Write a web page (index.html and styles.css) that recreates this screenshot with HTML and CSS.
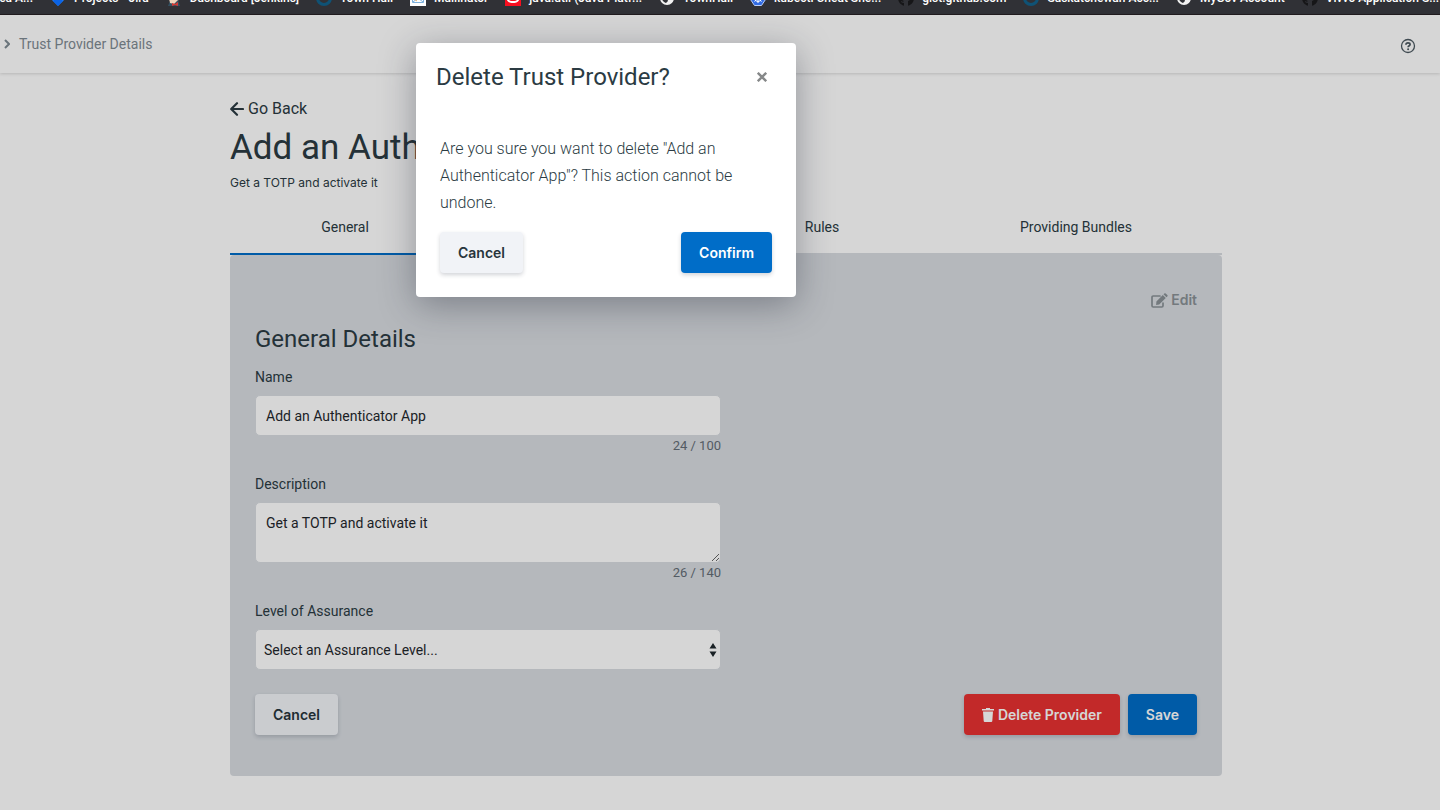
FILE: index.html
```html
<!DOCTYPE html>
<html lang="en">
<head>
<meta charset="utf-8">
<title>Trust Provider Details</title>
<link rel="stylesheet" href="styles.css">
</head>
<body>
<nav class="bookmarks" aria-label="Bookmarks">
  <a class="bookmark bookmark-first" href="#">Area A...</a>
  <a class="bookmark" href="#"><svg viewBox="0 0 16 16"><path fill="#2684ff" d="M8 0l8 8-8 8-8-8z"/><path fill="#0b63e5" d="M8 6l5 5-5 5-5-5z"/></svg>Projects - Jira</a>
  <a class="bookmark" href="#"><svg viewBox="0 0 16 16"><circle cx="8" cy="6" r="6" fill="#efd5bd"/><path fill="#335061" d="M2 16l2-5 8-1 2 6z"/><path fill="#efd5bd" d="M3 8l1 5 4 1 4-4V5H4z"/><path fill="#d33833" d="M6 13l3 1 3-2v4l-3-1-3 1z"/></svg>Dashboard [Jenkins]</a>
  <a class="bookmark" href="#"><svg viewBox="0 0 16 16"><circle cx="8" cy="8" r="6.500" fill="none" stroke="#0f5275" stroke-width="3" stroke-dasharray="34 7"/></svg>Town Hall</a>
  <a class="bookmark" href="#"><svg viewBox="0 0 16 16"><path fill="#fff" d="M0 0h16v16H0z"/><path fill="none" stroke="#7eb1dd" d="M2.500 4.500h11v8h-11zM3 12l5-4 5 4"/><path stroke="#e8b26b" d="M4 9l3 2"/></svg>Mailinator</a>
  <a class="bookmark" href="#"><svg viewBox="0 0 16 16"><path fill="#f80f20" d="M0 0h16v16H0z"/><rect x="2.500" y="4" width="11" height="8" rx="4" fill="none" stroke="#fff" stroke-width="2"/></svg>java.util (Java Platf...</a>
  <a class="bookmark" href="#"><svg viewBox="0 0 16 16"><circle cx="8" cy="8" r="7" fill="#f1f1f1"/><path fill="#303136" d="M3 6l5 2 1 3-2 2c-3-1-5-4-4-7zM9 2l5 4-1 4-3-2z"/></svg>TownHall</a>
  <a class="bookmark" href="#"><svg viewBox="0 0 16 16"><path fill="#326ce5" stroke="#b9cdf5" d="M8 .5l6 3 1.500 6-4 6h-7l-4-6L2 3.500z"/><circle cx="8" cy="8" r="3.500" fill="none" stroke="#fff"/><path stroke="#fff" d="M8 3v10M3 8h10M4.500 4.500l7 7M11.500 4.500l-7 7"/></svg>kubectl Cheat She...</a>
  <a class="bookmark" href="#"><svg viewBox="0 0 16 16"><circle cx="8" cy="8" r="8" fill="#161618"/><path fill="#303136" d="M6 16v-3c-2 0-3-1-3-2 2 1 2 1 3 0-3-1-3-3-3-6l3 1h4l3-1c0 3 0 5-3 6v5z"/></svg>gist.github.com</a>
  <a class="bookmark" href="#"><svg viewBox="0 0 16 16"><circle cx="8" cy="8" r="6.500" fill="none" stroke="#0f5275" stroke-width="3" stroke-dasharray="34 7"/></svg>Saskatchewan Acc...</a>
  <a class="bookmark" href="#"><svg viewBox="0 0 16 16"><circle cx="8" cy="8" r="7" fill="#f1f1f1"/><path fill="#303136" d="M3 6l5 2 1 3-2 2c-3-1-5-4-4-7zM9 2l5 4-1 4-3-2z"/></svg>MyGov Account</a>
  <a class="bookmark" href="#"><svg viewBox="0 0 16 16"><circle cx="8" cy="8" r="8" fill="#161618"/><path fill="#303136" d="M6 16v-3c-2 0-3-1-3-2 2 1 2 1 3 0-3-1-3-3-3-6l3 1h4l3-1c0 3 0 5-3 6v5z"/></svg>Vivvo Application S...</a>
</nav>

<div class="app">
  <header class="topbar">
    <nav class="crumbs" aria-label="Breadcrumb">
      <svg class="chevron" viewBox="0 0 6 10"><path fill="none" stroke="currentColor" stroke-width="2" d="M1 1l4 4-4 4"/></svg>
      <a href="#">Trust Provider Details</a>
    </nav>
    <button class="help" type="button" aria-label="Help">
      <svg viewBox="0 0 16 16" fill="none" stroke="currentColor"><circle cx="8" cy="8" r="6.500" stroke-width="1.300"/><path stroke-width="1.700" d="M5.900 6.700C6 5.400 6.900 4.900 8 4.900c1.200 0 2.100.6 2.100 1.600C10.100 7.800 8.100 7.700 8.100 9.300"/><circle cx="8.100" cy="11.200" r="1" fill="currentColor" stroke="none"/></svg>
    </button>
  </header>

  <main class="page">
    <div class="container">
      <a class="back" href="#"><svg viewBox="0 0 14 14"><path fill="none" stroke="currentColor" stroke-width="2.200" stroke-linejoin="round" stroke-linecap="round" d="M7 1.200L1.200 7 7 12.800M1.500 7H13"/></svg>Go Back</a>
      <h1>Add an Authenticator App</h1>
      <p class="subtitle">Get a TOTP and activate it</p>
      <div class="tabs" role="tablist">
        <button class="tab tab-active" type="button" role="tab" aria-selected="true">General</button>
        <span class="tab"></span>
        <button class="tab" type="button" role="tab">Rules</button>
        <button class="tab" type="button" role="tab">Providing Bundles</button>
      </div>
      <form class="panel">
        <button class="edit" type="button"><svg viewBox="0 0 17 15"><path fill="none" stroke="currentColor" stroke-width="1.700" stroke-linecap="round" d="M9 3H2.200Q1 3 1 4.200v8.600Q1 14 2.200 14h8.600Q12 14 12 12.800V10"/><path fill="currentColor" d="M11.800 2l3 3-6.600 6.500-3.100.4.300-3.300zM12.500 1.300l.8-.8q.7-.7 1.400 0l1.600 1.600q.7.700 0 1.400l-.8.8z"/></svg>Edit</button>
        <h2>General Details</h2>
        <div class="field">
          <label for="name">Name</label>
          <input id="name" type="text" value="Add an Authenticator App">
          <span class="count">24 / 100</span>
        </div>
        <div class="field">
          <label for="description">Description</label>
          <textarea id="description">Get a TOTP and activate it</textarea>
          <span class="count">26 / 140</span>
        </div>
        <div class="field">
          <label for="level">Level of Assurance</label>
          <div class="select">
            <select id="level"><option>Select an Assurance Level...</option></select>
            <svg viewBox="0 0 8 14"><path fill="currentColor" d="M4 0l3.500 5.500h-7zM4 14L.5 8.500h7z"/></svg>
          </div>
        </div>
        <div class="actions">
          <button class="btn btn-light" type="button">Cancel</button>
          <div class="actions-end">
            <button class="btn btn-danger" type="button"><svg viewBox="0 0 12 14"><path fill="currentColor" d="M0 1h4V0h4v1h4v1.600H0zM1 3.500h10L10.300 13q-.1 1-1 1H2.700q-.9 0-1-1z"/></svg>Delete Provider</button>
            <button class="btn btn-primary" type="submit">Save</button>
          </div>
        </div>
      </form>
    </div>
  </main>

  <div class="overlay">
    <section class="modal" role="dialog" aria-modal="true" aria-labelledby="dialog-title">
      <header class="modal-head">
        <h2 id="dialog-title">Delete Trust Provider?</h2>
        <button class="close" type="button" aria-label="Close"><svg viewBox="0 0 10 10"><path stroke="currentColor" stroke-width="2.400" d="M.8.800l8.400 8.400M9.200.800L.8 9.200"/></svg></button>
      </header>
      <p>Are you sure you want to delete "Add an Authenticator App"? This action cannot be undone.</p>
      <div class="modal-actions">
        <button class="btn btn-light" type="button">Cancel</button>
        <button class="btn btn-primary" type="button">Confirm</button>
      </div>
    </section>
  </div>
</div>
</body>
</html>
```
FILE: styles.css
```css
* { box-sizing: border-box; }
body {
  margin: 0;
  min-height: 100vh;
  display: flex;
  flex-direction: column;
  overflow: hidden;
  background: #fff;
  color: #2b3b43;
  font-family: Roboto, "Liberation Sans", sans-serif;
  font-size: 14px;
  line-height: 20px;
}
h1, h2, p { margin: 0; font-weight: 400; }
.subtitle, .btn, .edit { font-family: Inter, "Liberation Sans", sans-serif; }
button, input, textarea, select { font: inherit; color: inherit; }
button { border: 0; padding: 0; background: none; }
a { color: inherit; text-decoration: none; }
svg { display: block; flex: none; }

.bookmarks {
  display: flex;
  align-items: flex-end;
  gap: 17px;
  height: 15px;
  padding-bottom: 8px;
  overflow: hidden;
  background: #303136;
  border-bottom: 1px solid #211c1f;
  color: #fff;
  font-size: 12px;
  font-weight: 500;
  line-height: 16px;
  white-space: nowrap;
}
.bookmark { display: flex; flex: none; align-items: center; gap: 8px; }
.bookmark svg { width: 16px; height: 16px; }
.bookmark-first { width: 33px; justify-content: flex-end; }

.app { position: relative; flex: 1; }
.topbar {
  display: flex;
  align-items: center;
  justify-content: space-between;
  height: 58px;
  padding: 0 24px 0 4px;
  box-shadow: 0 1px 3px rgba(0, 0, 0, .15);
}
.crumbs { display: flex; align-items: center; gap: 9px; color: #7f8b93; }
.chevron { width: 6px; height: 10px; }
.help { padding-top: 3px; color: #4c5961; }
.help svg { width: 16px; height: 16px; }

.page { padding: 0 0 34px 12px; }
.container { max-width: 992px; margin: 0 auto; padding-top: 24px; }
.back { display: flex; align-items: center; gap: 4px; font-size: 16px; line-height: 24px; }
.back svg { width: 14px; height: 14px; }
h1 { margin-top: 4px; font-size: 35px; line-height: 46px; }
.subtitle { margin-top: 2px; font-size: 12px; line-height: 20px; }
.tabs { display: grid; grid-template-columns: 230fr 254fr 216fr 292fr; margin-top: 10px; }
.tab { height: 52px; padding-bottom: 2px; border-bottom: 2px solid #d8dce1; }
.tab-active { border-color: #006dc8; }

.panel { padding: 35px 25px 41px; border-radius: 4px; background: #d8dce1; }
.edit { display: flex; align-items: center; gap: 3px; margin-left: auto; color: #899196; font-weight: 600; }
.edit svg { width: 17px; height: 15px; }
.panel h2 { margin: 13px 0 12px; font-size: 24px; line-height: 32px; }
.field { display: flex; flex-direction: column; max-width: 466px; }
.field label { margin-bottom: 8px; }
.field input, .field textarea, .field select {
  display: block;
  width: 100%;
  height: 41px;
  margin: 0;
  padding: 0 10px;
  border: 1px solid #d8dce1;
  border-radius: 5px;
  background: #fff;
  color: #1f282d;
}
.field textarea { height: 61px; padding: 10px; resize: vertical; }
.field .count { margin-bottom: 18px; align-self: flex-end; color: #646d76; font-size: 13px; }
.select { position: relative; }
.field .select select { appearance: none; padding: 0 24px 0 8px; }
.select svg { position: absolute; right: 4px; top: 14px; width: 8px; height: 14px; color: #1f282d; pointer-events: none; }

.actions { display: flex; justify-content: space-between; margin-top: 24px; }
.actions-end { display: flex; gap: 8px; }
.btn {
  display: flex;
  align-items: center;
  gap: 4px;
  height: 41px;
  padding: 0 18px;
  border-radius: 4px;
  box-shadow: 0 2px 4px rgba(30, 40, 60, .2);
  color: #fff;
  font-weight: 600;
}
.btn svg { width: 12px; height: 14px; }
.btn-light { background: #f1f3f7; color: #27343b; }
.btn-primary { background: #006dc8; }
.btn-danger { background: #e83232; }

.overlay {
  position: absolute;
  inset: 0;
  display: flex;
  align-items: flex-start;
  justify-content: center;
  padding: 28px 228px 28px 0;
  background: rgba(0, 0, 0, .16);
}
.modal {
  width: 380px;
  padding: 18px 24px 24px;
  border-radius: 4px;
  background: #fff;
  box-shadow: 0 8px 36px rgba(30, 35, 50, .38);
}
.modal-head { display: flex; align-items: center; justify-content: space-between; margin: 0 5px 42px -4px; }
.modal-head h2 { font-size: 24px; line-height: 32px; }
.close { color: #868889; }
.close svg { width: 10px; height: 10px; }
.modal p { font-size: 16px; font-weight: 300; line-height: 27px; }
.modal-actions { display: flex; justify-content: space-between; margin-top: 16px; }
```
